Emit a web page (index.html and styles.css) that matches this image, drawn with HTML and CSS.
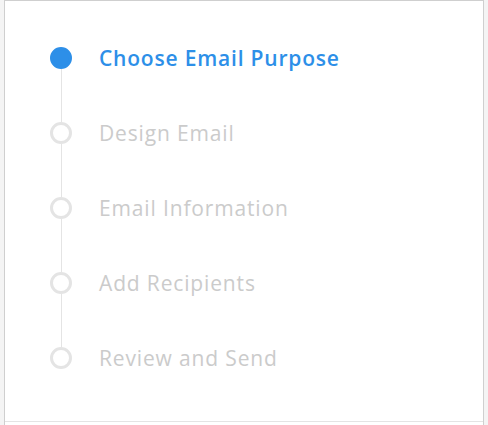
FILE: index.html
```html
<!DOCTYPE html>
<html>
<head>
<meta charset="utf-8">
<link rel="stylesheet" href="styles.css">
</head>
<body>
<div class="panel">
  <ol class="steps">
    <li class="step active">
      <div class="rail"><span class="dot"></span><span class="seg"></span></div>
      <span class="label">Choose Email Purpose</span>
    </li>
    <li class="step">
      <div class="rail"><span class="dot"></span><span class="seg"></span></div>
      <span class="label">Design Email</span>
    </li>
    <li class="step">
      <div class="rail"><span class="dot"></span><span class="seg"></span></div>
      <span class="label">Email Information</span>
    </li>
    <li class="step">
      <div class="rail"><span class="dot"></span><span class="seg"></span></div>
      <span class="label">Add Recipients</span>
    </li>
    <li class="step last">
      <div class="rail"><span class="dot"></span></div>
      <span class="label">Review and Send</span>
    </li>
  </ol>
  <div class="footer"></div>
</div>
</body>
</html>
```
FILE: styles.css
```css
html, body {
  margin: 0;
  padding: 0;
  background: #f4f4f4;
  height: 100%;
}
body {
  font-family: "Open Sans", Lato, sans-serif;
  padding: 0 4px;
  box-sizing: border-box;
}
.panel {
  background: #fff;
  border: 1px solid #cfcfcf;
  border-bottom: none;
  height: 100%;
  box-sizing: border-box;
  display: flex;
  flex-direction: column;
}
.steps {
  list-style: none;
  margin: 0;
  padding: 46px 0 0 45px;
  height: 420px;
  box-sizing: border-box;
  flex: none;
}
.step {
  display: flex;
  align-items: flex-start;
  height: 75px;
}
.step.last { height: 22px; }
.rail {
  width: 22px;
  display: flex;
  flex-direction: column;
  align-items: center;
  height: 100%;
}
.dot {
  width: 22px;
  height: 22px;
  border-radius: 50%;
  box-sizing: border-box;
  border: 3px solid #e4e4e4;
  background: #fff;
  flex: none;
}
.seg {
  width: 1px;
  flex: 1;
  background: #e4e4e4;
}
.active .dot {
  background: #2d8fe8;
  border-color: #2d8fe8;
}
.label {
  margin-left: 27px;
  font-size: 21px;
  line-height: 22px;
  letter-spacing: 0.85px;
  color: #cbcbcb;
  white-space: nowrap;
}
.active .label {
  color: #2d8fe8;
  font-weight: 600;
  letter-spacing: 0.8px;
}
.footer {
  border-top: 1px solid #e4e4e4;
  flex: 1;
}
```
